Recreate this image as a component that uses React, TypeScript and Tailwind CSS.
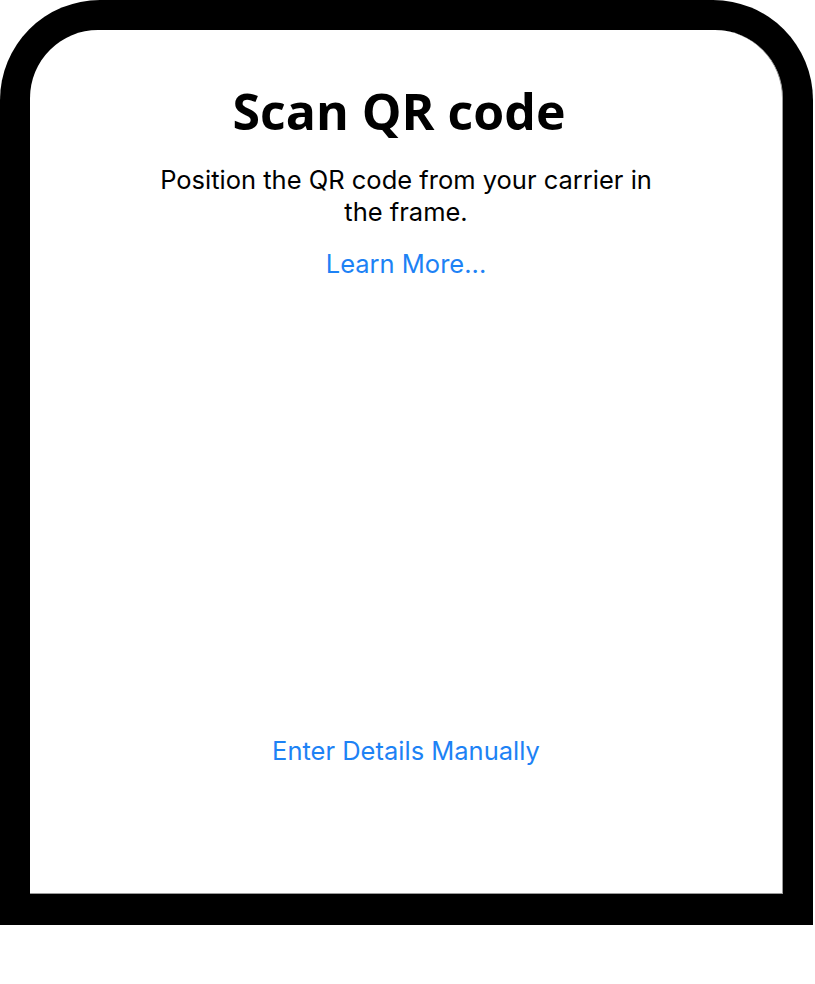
export default function App() {
  return (
    <div className="w-[815px] h-[984px] bg-white">
      <div className="w-[813px] h-[925px] bg-black rounded-t-[100px] pt-[30px] px-[30px] pb-[31px]">
        <div className="h-full bg-white rounded-t-[68px] flex flex-col items-center border-r border-b border-[#9a9a9a]">
          <h1 className="mt-[51px] mr-[14px] text-[50px] leading-[60px] font-bold text-black font-['Open_Sans',sans-serif]">
            Scan QR code
          </h1>
          <p className="mt-[23px] w-[530px] text-center text-[25.5px] leading-[32px] text-black font-['Inter',sans-serif]">
            Position the QR code from your carrier in the frame.
          </p>
          <a className="mt-[19px] text-[25.5px] leading-[34px] text-[#1d82f5] font-['Inter',sans-serif]">Learn More...</a>
          <div className="flex-1" />
          <a className="mb-[125px] text-[25.5px] leading-[34px] text-[#1d82f5] font-['Inter',sans-serif]">
            Enter Details Manually
          </a>
        </div>
      </div>
    </div>
  )
}
